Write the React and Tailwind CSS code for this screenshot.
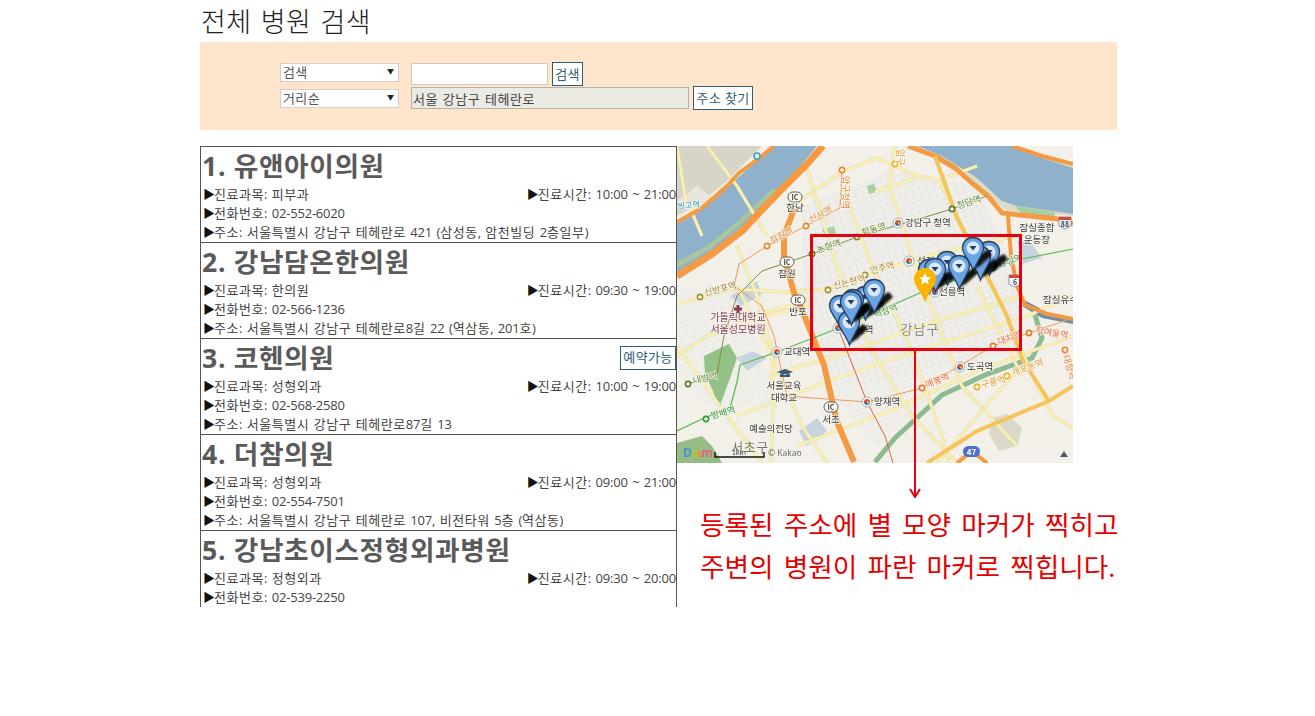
import React from 'react';

const hospitals = [
  { name: '1. 유앤아이의원', dept: '피부과', time: '10:00 ~ 21:00', tel: '02-552-6020', addr: '서울특별시 강남구 테헤란로 421 (삼성동, 암천빌딩 2층일부)' },
  { name: '2. 강남담온한의원', dept: '한의원', time: '09:30 ~ 19:00', tel: '02-566-1236', addr: '서울특별시 강남구 테헤란로8길 22 (역삼동, 201호)' },
  { name: '3. 코헨의원', dept: '성형외과', time: '10:00 ~ 19:00', tel: '02-568-2580', addr: '서울특별시 강남구 테헤란로87길 13', reserve: true },
  { name: '4. 더참의원', dept: '성형외과', time: '09:00 ~ 21:00', tel: '02-554-7501', addr: '서울특별시 강남구 테헤란로 107, 비전타워 5층 (역삼동)' },
  { name: '5. 강남초이스정형외과병원', dept: '정형외과', time: '09:30 ~ 20:00', tel: '02-539-2250' },
];

// 지도 위 도로 (map px)
const yellowRoads = [
  'M0 158 L55 143 L112 146 L150 143 L195 127 L250 110 L320 94 L348 88',
  'M0 210 L30 190 L80 172 L133 160',
  'M60 172 L112 160 L134 152',
  'M112 62 L165 26 L200 12 L240 30 L262 34 L300 20',
  'M198 46 L240 32',
  'M90 230 L160 210 L250 178 L345 150',
  'M60 270 L160 232 L260 198 L345 172 L396 150',
  'M120 300 L220 262 L300 225 L396 190',
  'M218 0 L212 40 L235 110 L262 180 L285 240 L340 300',
  'M130 24 L160 120 L195 205 L235 270 L280 317',
  'M165 40 L195 120 L235 205 L265 290 L272 317',
  'M262 34 L290 90 L330 170 L360 240 L376 270 L396 282',
  'M60 140 L95 210 L125 280 L150 317',
  'M0 200 L50 270 L85 317',
  'M60 100 L80 150 L95 205 L96 260 L94 317',
  'M30 0 L60 40 L90 90',
  'M0 0 L8 50 L25 90',
  'M260 317 L300 270 L340 225',
  'M300 140 L330 200 L345 230',
];

const dots = [
  [165, 24, '#e8872c'], [218, 18, '#e8b32c'], [129, 80, '#e8872c'], [90, 100, '#e8872c'],
  [135, 108, '#5c7d2e'], [180, 91, '#7d8a2e'], [151, 144, '#a8902c'], [188, 129, '#a8902c'],
  [23, 151, '#a8902c'], [275, 63, '#4f7d2e'], [316, 122, '#2f7d2e'], [29, 273, '#2f9d2e'],
  [11, 238, '#5c7d2e'], [316, 200, '#e8782c'], [352, 187, '#e8782c'], [388, 204, '#e8872c'],
  [245, 242, '#e8782c'], [300, 241, '#e8b32c'], [330, 230, '#e8b32c'],
];

const labels = [
  ['잠원역', 95, 98, -28, '#e8853a'], ['신사역', 134, 77, -28, '#e8853a'], ['논현역', 141, 107, -18, '#5f8a3a'],
  ['학동역', 186, 90, -18, '#6f8a3a'], ['신논현역', 157, 143, -14, '#b0883a'], ['언주역', 194, 128, -14, '#b0883a'],
  ['신반포역', 28, 150, -14, '#a0883a'], ['청담역', 281, 63, -18, '#5f8a3a'], ['삼성역', 322, 121, -16, '#3f8a3a'],
  ['방배역', 35, 273, -16, '#2f9a3a'], ['내방역', 17, 238, -14, '#5f8a3a'], ['역삼역', 198, 172, -20, '#3f9a3a'],
  ['대치역', 322, 199, -20, '#e8703a'], ['학여울역', 358, 187, 10, '#e8703a'], ['매봉역', 250, 242, -22, '#e8703a'],
  ['구룡역', 305, 242, -14, '#e8a03a'], ['개포동역', 336, 230, -20, '#e8a03a'],
];

const darkLabels = [
  ['한남', 118, 65, 'middle'], ['잠원', 110, 131, 'middle'], ['반포', 121, 169, 'middle'], ['서초', 154, 277, 'middle'],
  ['강남구 청역', 228, 80, 'start'], ['선정', 240, 118, 'start'], ['교대역', 107, 209, 'start'], ['남역', 179, 187, 'start'],
  ['도곡역', 290, 224, 'start'], ['양재역', 197, 259, 'start'], ['선릉역', 262, 149, 'start'], ['잠실종합', 360, 85, 'middle'],
  ['운동장', 360, 97, 'middle'], ['잠실유수', 366, 157, 'start'], ['서울교육', 107, 243, 'middle'], ['대학교', 107, 255, 'middle'],
  ['예술의전당', 94, 286, 'middle'],
];

const stations = [[221, 77], [232, 115], [100, 206], [161, 182], [283, 221], [190, 256], [258, 146]];
const interchanges = [[118, 51], [110, 116], [121, 154], [154, 261]];

// 파란 마커: 머리 중심 x, y
const pins = [
  [270, 116], [312, 106], [303, 111], [296, 102], [252, 124], [258, 123], [282, 120],
  [188, 151], [176, 154], [163, 160], [172, 176], [174, 156], [197, 144],
];

const Pin = ({ x, y }) => (
  <g transform={`translate(${x} ${y})`}>
    <path d="M0 22 L3 8 L15 2 L19 7 L8 17 Z" fill="#000" opacity="0.9" filter="url(#soft)" />
    <path d="M0 -10.5 C6.2 -10.5 10.5 -5.8 10.5 0 C10.5 6 4 13 0.5 23 C-3 13 -10.5 6 -10.5 0 C-10.5 -5.8 -6.2 -10.5 0 -10.5 Z" fill="#6ba4e4" stroke="#27415f" strokeWidth="1.3" />
    <circle r="6.5" fill="#dbe9f7" />
    <path d="M-3.5 -2 L3.5 -2 L0 2.5 Z" fill="#1f3f6e" />
  </g>
);

const MapDrawing = () => (
  <svg viewBox="0 0 396 317" className="w-full h-full block blur-[0.3px]" style={{ fontFamily: '"Noto Sans CJK KR", sans-serif' }}>
    <defs>
      <pattern id="blocks" width="7" height="6" patternUnits="userSpaceOnUse" patternTransform="rotate(-18)">
        <rect width="7" height="6" fill="#efeeea" />
        <path d="M0 0 H7 M0 0 V6" stroke="#dfded9" strokeWidth="0.8" />
      </pattern>
      <filter id="soft" x="-30%" y="-30%" width="160%" height="160%">
        <feGaussianBlur stdDeviation="0.8" />
      </filter>
    </defs>
    <rect width="396" height="317" fill="#f2f0e9" />
    {/* 블록 */}
    <path d="M125 60 L215 25 L300 40 L345 140 L345 205 L160 245 L125 160 Z" fill="url(#blocks)" />
    <path d="M0 150 L60 140 L100 260 L30 260 L0 220 Z" fill="url(#blocks)" opacity="0.7" />
    <path d="M140 230 L260 190 L280 240 L200 300 Z" fill="url(#blocks)" opacity="0.7" />
    <path d="M0 0 L85 0 L50 35 L20 60 L0 70 Z" fill="#d8d5c8" />
    <path d="M0 55 L20 40 L40 55 L15 68 Z" fill="#e8e6da" />
    <path d="M250 0 L330 0 L396 20 L396 70 L330 65 L300 40 Z" fill="#d8dcc8" />

    {/* 물 */}
    <path d="M0 76 L25 63 L50 42 L65 28 L85 10 L97 0 L140 0 L125 18 L95 50 L65 80 L40 102 L0 128 Z" fill="#8fb1cc" />
    <path d="M240 0 L335 0 L365 12 L396 22 L396 68 L340 60 L325 55 L300 32 L265 10 Z" fill="#8fb1cc" />
    <path d="M349 155 L370 166 L396 172 L396 178 L365 172 L345 160 Z" fill="#6d8ea6" />
    <path d="M53 150 L80 135 L85 148 L65 160 Z" fill="#c5d4df" />
    <path d="M60 212 L75 205 L90 212 L70 225 Z" fill="#c5d4df" />
    <path d="M122 285 L140 272 L150 285 L130 300 Z" fill="#c5d4df" />
    <path d="M340 95 L355 98 L365 112 L345 118 Z" fill="#c5d4df" />

    {/* 녹지 */}
    <path d="M27 210 L52 198 L60 212 L52 235 L42 262 L36 245 L28 228 Z" fill="#94c286" />
    <path d="M0 297 L25 290 L35 300 L45 317 L0 317 Z" fill="#93bd85" />
    <path d="M0 122 L32 104 L62 80 L100 44 L96 42 L60 76 L30 100 L0 116 Z" fill="#a8c89c" />
    <path d="M338 60 L378 66 L378 72 L345 68 Z" fill="#a8cfa0" />
    <path d="M190 40 L197 38 L200 46 L192 48 Z" fill="#a8cfa0" />
    <path d="M145 84 L157 80 L159 88 L150 92 Z" fill="#a8cfa0" />
    <path d="M198 316 L218 292 L265 249 L308 229 L355 212 L365 192 L358 169" fill="none" stroke="#8cbb90" strokeWidth="5" />
    <path d="M315 272 L330 268 L345 282 L340 300 L322 305 L312 288 Z" fill="#dcd8c8" />

    {/* 일반 도로 */}
    {yellowRoads.map((d, i) => (
      <g key={i} fill="none">
        <path d={d} stroke="#e0d8ae" strokeWidth="3.4" />
        <path d={d} stroke="#faf0b4" strokeWidth="2.5" />
      </g>
    ))}

    {/* 고속도로 */}
    <g fill="none" stroke="#f39a42" strokeLinejoin="round">
      <path d="M0 130 L35 108 L65 85 L100 48 L130 18 L146 0" strokeWidth="7" />
      <path d="M0 76 L25 62 L50 40 L62 27 L85 10 L97 0" strokeWidth="4" />
      <path d="M117 63 L107 90 L107 110 L117 147 L123 159 L147 219 L160 276 L177 316" strokeWidth="6" />
      <path d="M231 0 L258 10 L278 22 L295 37 L311 50 L325 67 L381 73 L396 78" strokeWidth="5" />
      <path d="M335 0 L365 10 L396 18" strokeWidth="4" />
      <path d="M331 70 L334 110 L340 140 L348 159 L370 168 L396 173" strokeWidth="4" />
      <path d="M280 317 L295 305 L310 317" strokeWidth="4" />
    </g>
    <g fill="none" stroke="#f3c55a" strokeLinejoin="round">
      <path d="M258 10 L280 72 L300 110 L330 170 L346 215 L372 255" strokeWidth="4" />
      <path d="M250 317 L300 285 L372 255 L396 240" strokeWidth="4" />
    </g>

    {/* 지하철 */}
    <g fill="none" strokeLinejoin="round">
      <path d="M0 285 L27 272 L53 262 L60 236 L63 219 L100 206 L157 184 L193 169 L245 146 L315 121 L345 113 L396 103" stroke="#56b84a" strokeWidth="1.2" />
      <path d="M11 238 L40 228 L47 190 L60 150 L85 125 L135 108 L180 91 L245 72 L275 63 L310 50" stroke="#8a8a4a" strokeWidth="1" />
      <path d="M165 24 L163 62 L129 80 L90 100 L62 118 L57 140 L85 160 L97 190 L110 250 L190 256 L245 242 L316 200 L352 187 L396 172" stroke="#ec9a5c" strokeWidth="1" />
      <path d="M161 182 L190 256 L208 290 L216 317" stroke="#d9674c" strokeWidth="1" />
    </g>

    {/* 역 점 */}
    {dots.map(([x, y, c], i) => (
      <circle key={i} cx={x} cy={y} r="2.6" fill="#fff" stroke={c} strokeWidth="1.6" />
    ))}
    {stations.map(([x, y], i) => (
      <g key={i}>
        <circle cx={x} cy={y} r="5" fill="#fff" stroke="#9a9a9a" strokeWidth="0.8" />
        <path d={`M${x - 3} ${y} A3 3 0 0 1 ${x + 3} ${y} Z`} fill="#e0502f" />
        <path d={`M${x - 3} ${y} A3 3 0 0 0 ${x + 3} ${y} Z`} fill="#3568b8" />
        <circle cx={x + 1} cy={y + 0.5} r="1.3" fill="#f0c030" />
      </g>
    ))}
    {interchanges.map(([x, y], i) => (
      <g key={i}>
        <rect x={x - 7} y={y - 5} width="14" height="10" rx="5" fill="#fbfaf2" stroke="#55554a" strokeWidth="0.9" />
        <text x={x} y={y + 2.6} textAnchor="middle" fontSize="7" fontWeight="700" fill="#444">IC</text>
      </g>
    ))}

    {/* 라벨 */}
    {labels.map(([t, x, y, r, c]) => (
      <text key={t} x={x} y={y} fontSize="9" fill={c} transform={`rotate(${r} ${x} ${y})`} stroke="#f7f5ee" strokeWidth="1.5" paintOrder="stroke">{t}</text>
    ))}
    <text x="165" y="30" fontSize="9" fill="#e8853a" transform="rotate(90 165 30)" textAnchor="start" stroke="#f7f5ee" strokeWidth="1.5" paintOrder="stroke">압구정역</text>
    <text x="220" y="3" fontSize="9" fill="#e8a03a" transform="rotate(90 220 3)" stroke="#f7f5ee" strokeWidth="1.5" paintOrder="stroke">압구</text>
    <text x="386" y="210" fontSize="9" fill="#e8853a" transform="rotate(75 386 210)" stroke="#f7f5ee" strokeWidth="1.5" paintOrder="stroke">대청역</text>
    <text x="1" y="63" fontSize="8" fill="#2a9fb5" transform="rotate(-5 1 63)" stroke="#f7f5ee" strokeWidth="1.5" paintOrder="stroke">빙고역</text>
    <circle cx="80" cy="10" r="3" fill="#fff" stroke="#2aa9c0" strokeWidth="1.6" />
    {darkLabels.map(([t, x, y, a]) => (
      <text key={t} x={x} y={y} fontSize="9.5" fill="#3a3a3a" textAnchor={a} stroke="#f7f5ee" strokeWidth="1.5" paintOrder="stroke">{t}</text>
    ))}
    <g fontSize="10" fill="#7a3a52" textAnchor="middle" stroke="#f7f5ee" strokeWidth="1.5" paintOrder="stroke">
      <text x="61" y="175">가톨릭대학교</text>
      <text x="61" y="187">서울성모병원</text>
    </g>
    <path d="M59.500 159 h3 v2.500 h2.500 v3 h-2.500 v2.500 h-3 v-2.500 h-2.500 v-3 h2.500 Z" fill="#8a3a52" />
    <path d="M100 226 L108 223 L116 226 L108 229 Z M103 228 V231 H113 V228" fill="#3a5a75" />
    <text x="243" y="188" fontSize="13" fill="#8a8a82" textAnchor="middle" letterSpacing="1">강남구</text>
    <text x="73" y="306" fontSize="13" fill="#77776f" textAnchor="middle" letterSpacing="0.500">서초구</text>

    {/* 지도 컨트롤 */}
    <path d="M38 306 V311 H87 V306" fill="none" stroke="#111" strokeWidth="1.4" />
    <text x="62" y="309" fontSize="7" fill="#444" textAnchor="middle">1km</text>
    <text x="91" y="310" fontSize="8.500" fill="#666" fontFamily="Open Sans, sans-serif">© Kakao</text>
    <g fontSize="12" fontWeight="700" fontFamily="Open Sans, sans-serif">
      <text x="6" y="311" fill="#4a8fe0">D</text>
      <text x="14" y="311" fill="#b8c42c">a</text>
      <text x="20" y="311" fill="#e8903c">u</text>
      <text x="24" y="311" fill="#e0608a">m</text>
    </g>
    <rect x="286" y="300" width="17" height="11" rx="5.500" fill="#4a6fd0" />
    <text x="294.500" y="309" fontSize="8" fontWeight="700" fill="#fff" textAnchor="middle">47</text>
    <g>
      <path d="M382 71 H394 V80 L388 83 L382 80 Z" fill="#fff" stroke="#778" strokeWidth="0.8" />
      <rect x="382" y="71" width="12" height="3" fill="#d04a3a" />
      <text x="388" y="81" fontSize="7" fontWeight="700" fill="#345" textAnchor="middle">88</text>
    </g>
    <g>
      <path d="M332 129 H344 V138 L338 141 L332 138 Z" fill="#fff" stroke="#778" strokeWidth="0.8" />
      <rect x="332" y="129" width="12" height="3" fill="#d04a3a" />
      <text x="338" y="139" fontSize="7" fontWeight="700" fill="#345" textAnchor="middle">6</text>
    </g>
    <path d="M383 311 L387 305 L391 311 Z" fill="#556" />

    {/* 마커 */}
    {pins.map(([x, y], i) => (
      <Pin key={i} x={x} y={y} />
    ))}
    <g transform="translate(248 133)">
      <path d="M0 -11 C6.500 -11 11 -6 11 0 C11 6 4 13 0 23 C-4 13 -11 6 -11 0 C-11 -6 -6.500 -11 0 -11 Z" fill="#f9b400" />
      <path d="M0 -6 L1.800 -1.900 L6 -1.500 L2.800 1.300 L3.800 5.500 L0 3.300 L-3.800 5.500 L-2.800 1.300 L-6 -1.500 L-1.800 -1.900 Z" fill="#fff" />
    </g>
  </svg>
);

const ActionButton = ({ children, className = '' }) => (
  <button className={`h-[24px] bg-white border border-[#2f5d73] text-[13px] leading-none tracking-[0.4px] text-[#2f5d73] px-0 whitespace-nowrap ${className}`}>
    {children}
  </button>
);

const SelectBox = ({ value, className = '' }) => (
  <div className={`relative w-[119px] h-[19px] shrink-0 ${className}`}>
    <select defaultValue={value} className="block appearance-none w-full h-full bg-white border border-[#d4cfc6] pl-[2px] py-0 text-[13px] leading-none tracking-[0.4px] text-[#555] rounded-none outline-none">
      <option>{value}</option>
    </select>
    <span className="absolute right-[5px] top-[4px] text-[7px] leading-[10px] text-[#222]">▼</span>
  </div>
);

// 한글 부분만 자간을 넓힌다
const Ko = ({ text }) =>
  String(text).split(/([가-힣]+)/).map((part, i) =>
    /[가-힣]/.test(part) ? <span key={i} className="tracking-[0.55px]">{part}</span> : part
  );

const InfoLine = ({ label, value, className = '' }) => (
  <p className={`whitespace-nowrap tracking-[-0.2px] [word-spacing:1.3px] ${className}`}>
    <span className="inline-block w-[11px] text-[#111] text-[12px]">▶</span>
    <Ko text={`${label}: ${value}`} />
  </p>
);

const HospitalRow = ({ item }) => (
  <div className="h-[96px] border-b border-[#555] shrink-0">
    <div className="h-[38px] flex items-center justify-between pl-[1px]">
      <h3 className="text-[26.67px] leading-[38px] tracking-[0.65px] font-bold text-[#5a5a5a] whitespace-nowrap">{item.name}</h3>
      {item.reserve && <ActionButton className="w-[56px] mt-[-1px]">예약가능</ActionButton>}
    </div>
    <div className="text-[13px] leading-[19px] text-[#444] pl-[2px]">
      <div className="flex justify-between">
        <InfoLine label="진료과목" value={item.dept} />
        <InfoLine label="진료시간" value={item.time} />
      </div>
      <InfoLine label="전화번호" value={item.tel} />
      {item.addr && <InfoLine label="주소" value={item.addr} />}
    </div>
  </div>
);

const App = () => {
  return (
    <div className="bg-white h-[716px] overflow-hidden" style={{ fontFamily: '"Open Sans", "Noto Sans CJK KR", sans-serif' }}>
      <div className="ml-[200px] w-[917px]">
        <h1 className="h-[42px] pl-[1px] text-[27px] leading-[44px] text-[#222] tracking-[0.5px] [word-spacing:1.5px] font-light">전체 병원 검색</h1>

        <div className="h-[88px] bg-[#fee5cc] pl-[80px] pt-[20px]">
          <div className="flex items-start h-[24px]">
            <SelectBox value="검색" className="mt-[1px]" />
            <input className="ml-[12px] mt-[1px] w-[137px] h-[22px] bg-white border border-[#cfcac0]" />
            <ActionButton className="ml-[4px] w-[31px]">검색</ActionButton>
          </div>
          <div className="flex items-center h-[24px]">
            <SelectBox value="거리순" />
            <input readOnly value="서울 강남구 테헤란로" className="ml-[12px] w-[278px] h-[22px] bg-[#ebebe4] border border-[#b5b2aa] pl-[1px] text-[13px] tracking-[0.5px] [word-spacing:1px] text-[#444]" />
            <ActionButton className="ml-[4px] w-[60px]">주소 찾기</ActionButton>
          </div>
        </div>

        <div className="flex mt-[16px]">
          <div className="w-[477px] h-[461px] border border-b-0 border-[#555] overflow-hidden shrink-0">
            {hospitals.map((item) => (
              <HospitalRow key={item.name} item={item} />
            ))}
          </div>

          <div className="relative w-[440px]">
            <div className="w-[396px] h-[317px] overflow-hidden">
              <MapDrawing />
            </div>
            <div className="absolute left-[133px] top-[88px] w-[212px] h-[117px] border-[3px] border-[#e60012]" />
            <svg className="absolute left-[230px] top-[204px]" width="16" height="148" viewBox="0 0 16 148">
              <path d="M8 0 V146 M3 139 L8 147 L13 139" fill="none" stroke="#e60012" strokeWidth="2" />
            </svg>
            <div className="mt-[41px] pl-[23px] text-[26.67px] leading-[42px] text-[#e50000] whitespace-nowrap [word-spacing:3.2px]">
              <p>등록된 주소에 별 모양 마커가 찍히고</p>
              <p>주변의 병원이 파란 마커로 찍힙니다.</p>
            </div>
          </div>
        </div>
      </div>
    </div>
  );
};

export default App;
